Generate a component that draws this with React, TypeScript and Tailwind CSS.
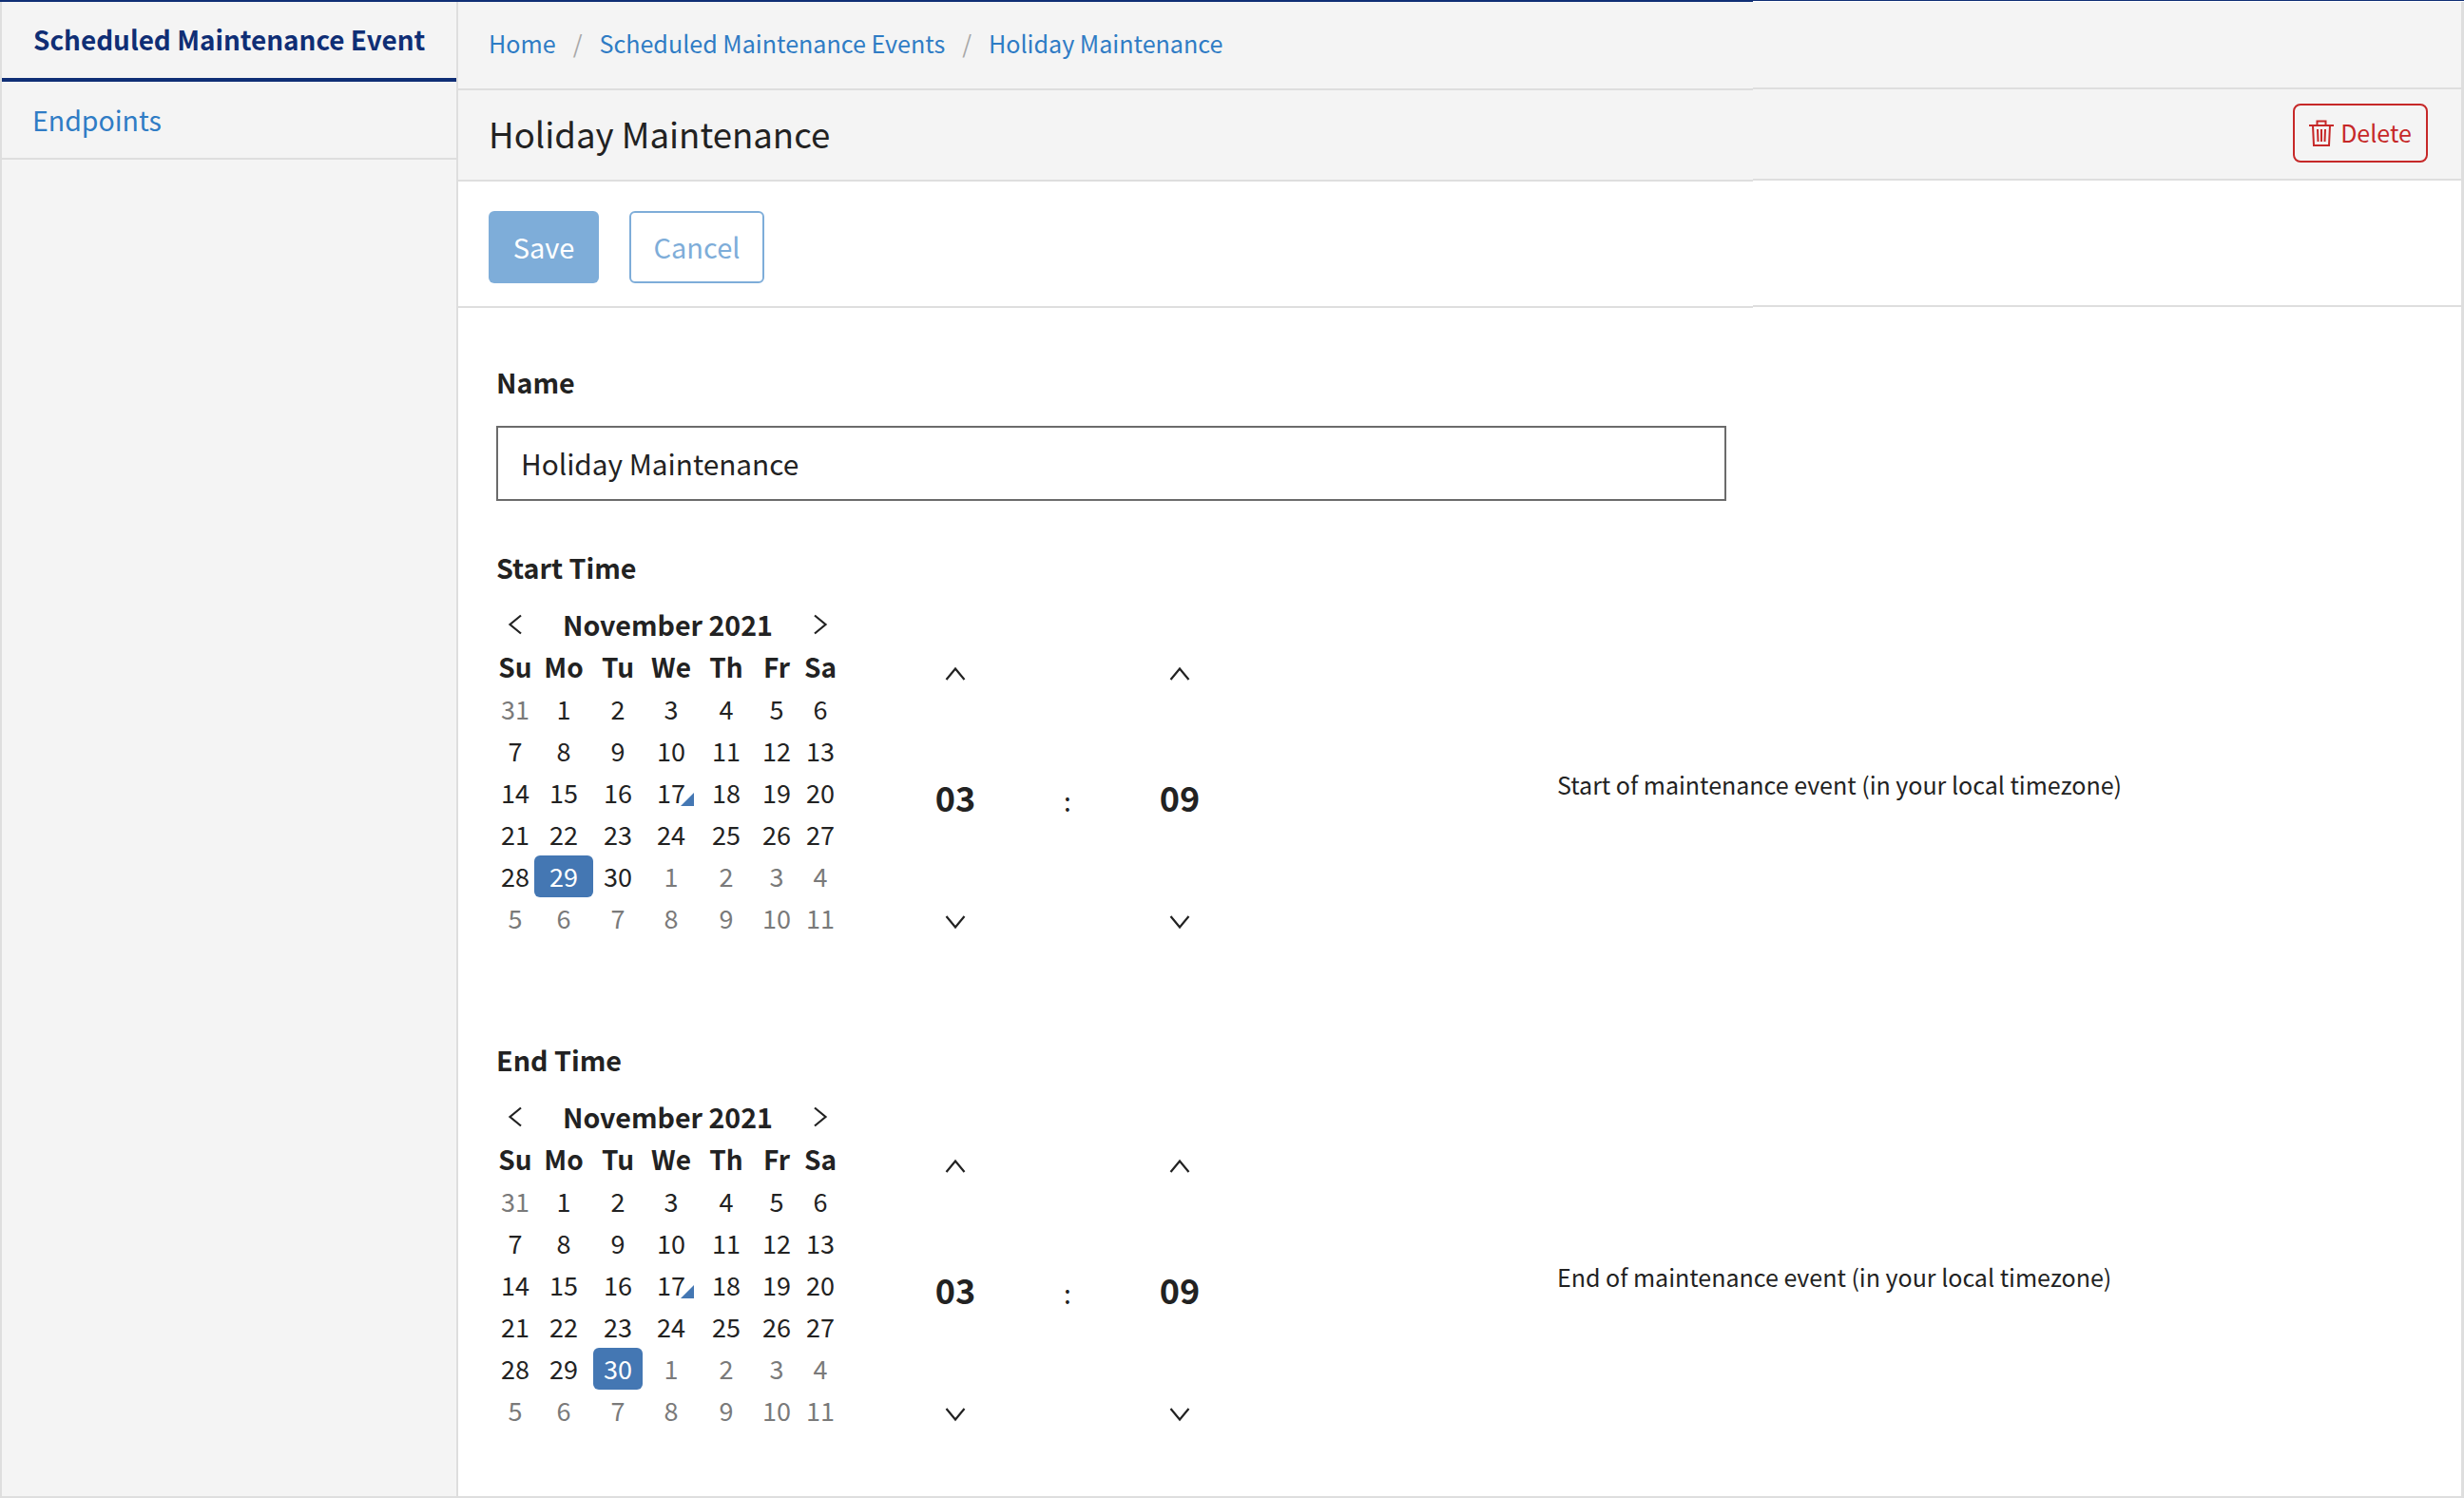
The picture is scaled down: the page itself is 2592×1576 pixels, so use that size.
import React from "react";

const font = { fontFamily: '"Noto Sans CJK SC", "Source Sans Pro", sans-serif' };

function Divider({ above, below }: { above: string; below: string }) {
  return (
    <div className="flex h-[3px] shrink-0">
      <div className="flex w-[1362px] flex-col">
        <div className={`h-px ${above}`} />
        <div className="h-[2px] bg-[#dedede]" />
      </div>
      <div className="flex flex-1 flex-col">
        <div className="h-[2px] bg-[#dedede]" />
        <div className={`h-px ${below}`} />
      </div>
    </div>
  );
}

const Chev = ({ d, className }: { d: string; className?: string }) => (
  <svg width="24" height="24" viewBox="0 0 24 24" fill="none" stroke="#222" strokeWidth="2.2" className={className}>
    <path d={d} />
  </svg>
);
const UP = "M2.5 18 L12 6.5 L21.5 18";
const DOWN = "M2.5 6 L12 17.5 L21.5 6";
const LEFT = "M18 2.5 L6.5 12 L18 21.5";
const RIGHT = "M6 2.5 L17.5 12 L6 21.5";

const HEAD = ["Su", "Mo", "Tu", "We", "Th", "Fr", "Sa"];
const DAYS: [number, boolean][] = [
  [31, true],
  ...Array.from({ length: 30 }, (_, i) => [i + 1, false] as [number, boolean]),
  ...[1, 2, 3, 4, 5, 6, 7, 8, 9, 10, 11].map((n) => [n, true] as [number, boolean]),
];

function Calendar({ selected }: { selected: number }) {
  return (
    <div className="w-[362px] shrink-0">
      <div className="relative flex h-[44px] items-center justify-center text-[28.6px] leading-[44px] font-bold text-[#222]">
        <Chev d={LEFT} className="absolute left-[8px] top-[9px]" />
        <span className="ml-[-1px] mt-[-2px]">November 2021</span>
        <Chev d={RIGHT} className="absolute left-[329px] top-[9px]" />
      </div>
      <div className="grid grid-cols-[40px_62px_52px_60px_56px_50px_42px] text-center text-[27px] leading-[44px]">
        {HEAD.map((h) => (
          <div key={h} className="h-[44px] text-[28px] leading-[42px] font-bold text-[#222]">
            {h}
          </div>
        ))}
        {DAYS.map(([n, muted], i) => {
          const isSel = !muted && n === selected;
          return (
            <div
              key={i}
              className={`relative h-[44px] rounded-[6px] ${isSel ? "bg-[#4477b3] text-white" : muted ? "text-[#7a7a7a]" : "text-[#222]"}`}
            >
              {n}
              {!muted && n === 17 && (
                <span className="absolute right-[6px] bottom-[8px] h-0 w-0 border-b-[14px] border-l-[14px] border-b-[#4477b3] border-l-transparent" />
              )}
            </div>
          );
        })}
      </div>
    </div>
  );
}

function TimePicker() {
  return (
    <div className="ml-[61px] grid h-[352px] w-[356px] shrink-0 grid-cols-[120px_116px_120px] pt-[61px] text-[#222]">
      <div className="flex h-[285px] flex-col items-center justify-between">
        <Chev d={UP} />
        <span className="mt-[-3px] text-[36px] leading-[44px] font-bold">03</span>
        <Chev d={DOWN} />
      </div>
      <div className="flex h-[285px] items-center justify-center pt-[4px] text-[28px] leading-[44px]">:</div>
      <div className="flex h-[285px] flex-col items-center justify-between">
        <Chev d={UP} />
        <span className="mt-[-3px] text-[36px] leading-[44px] font-bold">09</span>
        <Chev d={DOWN} />
      </div>
    </div>
  );
}

function TimeSection({ label, selected, help, className }: { label: string; selected: number; help: string; className?: string }) {
  return (
    <section className={className}>
      <h2 className="h-[44px] text-[28.7px] leading-[44px] font-bold text-[#222]">{label}</h2>
      <div className="mt-[17px] flex">
        <Calendar selected={selected} />
        <TimePicker />
        <p className="ml-[337px] pt-[167px] text-[25px] leading-[44px] text-[#222]">{help}</p>
      </div>
    </section>
  );
}

export default function App() {
  return (
    <div style={font} className="flex h-[1576px] w-[2592px] flex-col overflow-hidden bg-white">
      <div className="flex shrink-0">
        <div className="h-[2px] w-[1844px] bg-[#0f2e75]" />
        <div className="h-px flex-1 bg-[#0f2e75]" />
      </div>
      <div className="flex min-h-0 flex-1 border-b-2 border-l-2 border-r-[3px] border-[#dedede]">
        <aside className="flex w-[480px] shrink-0 flex-col border-r-2 border-[#dedede] bg-[#f4f4f4]">
          <div className="box-content flex h-[80px] shrink-0 items-center border-b-4 border-[#0f2e75] pl-[33px] text-[27.9px] font-semibold text-[#0f2e75]">
            <span>Scheduled Maintenance Event</span>
          </div>
          <div className="flex h-[82px] shrink-0 items-center border-b-2 border-[#dedede] pl-[32px] text-[28.5px] text-[#2f7cc5]">
            Endpoints
          </div>
        </aside>
        <main className="flex min-w-0 flex-1 flex-col">
          <nav className="flex h-[90px] shrink-0 items-center bg-[#f4f4f4] pb-[2px] pl-[32px] text-[25.1px] text-[#2f7cc5]">
            <span>Home</span>
            <span className="mx-[18px] text-[#a8a8a8]">/</span>
            <span>Scheduled Maintenance Events</span>
            <span className="mx-[18px] text-[#a8a8a8]">/</span>
            <span>Holiday Maintenance</span>
          </nav>
          <Divider above="bg-[#f4f4f4]" below="bg-[#f4f4f4]" />
          <div className="flex h-[93px] shrink-0 items-center justify-between bg-[#f4f4f4] pl-[32px] pr-[35px]">
            <h1 className="text-[36.6px] font-normal text-[#222]">Holiday Maintenance</h1>
            <button className="mt-[-4px] flex h-[62px] w-[142px] items-center justify-center gap-[7px] rounded-[8px] border-2 border-[#c62828] text-[25px] text-[#c62828]">
              <svg width="26" height="28" viewBox="0 0 26 28" fill="none" stroke="#c62828" strokeWidth="2">
                <path d="M0 6 H26 M8.5 6 V1.5 H17.5 V6 M4 6 L5 27 H21 L22 6 M9 10 L9.5 23 M13 10 V23 M17 10 L16.5 23" />
              </svg>
              Delete
            </button>
          </div>
          <Divider above="bg-[#f4f4f4]" below="bg-white" />
          <div className="flex h-[130px] shrink-0 items-start gap-[32px] pl-[32px] pt-[31px]">
            <button className="flex h-[76px] w-[116px] items-center justify-center rounded-[6px] bg-[#7eadd9] text-[29px] text-white">
              Save
            </button>
            <button className="flex h-[76px] w-[142px] items-center justify-center rounded-[6px] border-2 border-[#7eadd9] text-[29px] text-[#7eadd9]">
              Cancel
            </button>
          </div>
          <Divider above="bg-white" below="bg-white" />
          <div className="min-h-0 flex-1 pl-[40px] pt-[56px]">
            <label className="block h-[44px] text-[28.7px] leading-[44px] font-bold text-[#222]">Name</label>
            <div className="mt-[24px] flex h-[79px] w-[1294px] items-center border-2 border-[#6b6b6b] pl-[24px] text-[29.75px] text-[#222]">
              Holiday Maintenance
            </div>
            <TimeSection className="mt-[48px]" label="Start Time" selected={29} help="Start of maintenance event (in your local timezone)" />
            <TimeSection className="mt-[105px]" label="End Time" selected={30} help="End of maintenance event (in your local timezone)" />
          </div>
        </main>
      </div>
    </div>
  );
}
